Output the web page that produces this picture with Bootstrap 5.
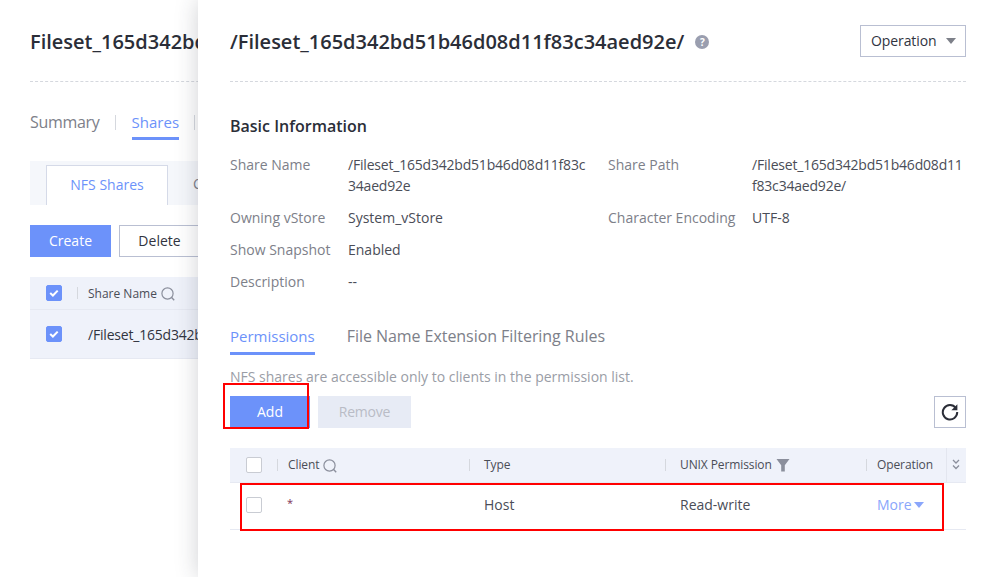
<!DOCTYPE html>
<html lang="en">

<head>
    <meta charset="UTF-8">
    <meta name="viewport" content="width=device-width, initial-scale=1.0">
    <title>Share details</title>
    <link href="https://cdn.jsdelivr.net/npm/bootstrap@5.3.3/dist/css/bootstrap.min.css" rel="stylesheet">
    <style>
        html, body {
            height: 577px;
            overflow: hidden;
        }

        body {
            font-family: "Open Sans", "Noto Sans", sans-serif;
            font-size: 14px;
            color: #31343f;
            background: #fff;
            position: relative;
        }

        /* page behind the drawer */
        .back-page {
            width: 300px;
            padding: 0 0 0 30px;
            white-space: nowrap;
            overflow: hidden;
        }

        .page-title {
            font-size: 20px;
            font-weight: 600;
            line-height: 28px;
            margin: 0;
            color: #2b2e38;
        }

        .back-head {
            height: 82px;
            padding-top: 28px;
            border-bottom: 1px dashed #d5d8de;
        }

        .main-tabs {
            height: 58px;
            padding-top: 29px;
            font-size: 16px;
            line-height: 22px;
            color: #7d8089;
            letter-spacing: -.3px;
        }

        .main-tabs .sep {
            width: 1px;
            height: 15px;
            background: #d5d8de;
            margin: 0 16px 0 15px;
        }

        .tab-on {
            color: #6c92fa;
            border-bottom: 3px solid #6c92fa;
            height: 29px;
            font-size: 15px;
            letter-spacing: 0;
        }

        .sub-tabs {
            margin-top: 21px;
            height: 44px;
            padding: 4px 0 0 16px;
            background: #f5f7fb;
        }

        .sub-tab {
            width: 122px;
            height: 40px;
            line-height: 38px;
            text-align: center;
            background: #fff;
            color: #6c92fa;
            border: 1px solid #d5dae8;
            border-bottom: 0;
        }

        .sub-next {
            margin-left: 25px;
            line-height: 38px;
            color: #7d8089;
        }

        .btn-hw {
            height: 32px;
            border-radius: 0;
            font-size: 14px;
            line-height: 30px;
            padding: 0;
        }

        .btn-blue, .btn-blue:hover {
            background: #6c92fa;
            border: 1px solid #6c92fa;
            color: #fff;
        }

        .btn-line {
            background: #fff;
            border: 1px solid #b9bfd2;
            color: #31343f;
        }

        .btn-off, .btn-off:disabled {
            background: #e7ebf5;
            border: 1px solid #e7ebf5;
            color: #b9bcc6;
            opacity: 1;
            letter-spacing: -.2px;
        }

        .back-actions {
            padding-top: 20px;
        }

        .back-table {
            margin-top: 20px;
            background: #eff2fa;
        }

        .back-row {
            display: flex;
            align-items: center;
            padding-left: 16px;
        }

        .back-row.top {
            height: 33px;
            font-size: 12px;
            color: #4a4d57;
            border-bottom: 1px solid #e6e9f2;
        }

        .back-row.bottom {
            height: 49px;
            letter-spacing: -.2px;
            border-bottom: 1px solid #e6e9f2;
        }

        .chk {
            width: 16px;
            height: 16px;
            flex: none;
            display: block;
            border: 1px solid #c9ccd3;
            border-radius: 2px;
            background: #fff;
        }

        .chk.on {
            background: #6c92fa;
            border-color: #6c92fa;
        }

        .chk svg {
            display: block;
        }

        .vbar {
            width: 1px;
            height: 12px;
            background: #d5d8de;
            display: inline-block;
            flex: none;
        }

        .back-row .vbar {
            margin: 0 10px 0 15px;
        }

        .head-label {
            padding-top: 2px;
        }

        .find-icon {
            margin-left: 4px;
            margin-top: 2px;
            flex: none;
        }

        /* drawer */
        .drawer {
            position: absolute;
            left: 198px;
            top: 0;
            width: 790px;
            height: 577px;
            padding: 0 22px 0 32px;
            background: #fff;
            box-shadow: 0 0 22px rgba(40, 44, 60, .22);
        }

        .drawer-head {
            height: 82px;
            border-bottom: 1px dashed #d5d8de;
            padding-top: 25px;
        }

        .drawer-head .page-title {
            padding-top: 3px;
        }

        .help-dot {
            width: 14px;
            height: 14px;
            border-radius: 50%;
            background: #9a9eaf;
            color: #fff;
            font-size: 10px;
            font-weight: 700;
            line-height: 14px;
            text-align: center;
            margin-left: 11px;
            margin-top: 3px;
        }

        .op-btn {
            width: 106px;
            height: 32px;
            display: flex;
            align-items: center;
            justify-content: space-between;
            padding: 0 9px 1px 10px;
            background: #fff;
            border: 1px solid #b9bfd2;
            color: #31343f;
            font-size: 14px;
            letter-spacing: -.1px;
        }

        .tri {
            width: 0;
            height: 0;
            flex: none;
            border-left: 5.5px solid transparent;
            border-right: 5.5px solid transparent;
            border-top: 6px solid #7d8089;
        }

        .sec-title {
            font-size: 16px;
            font-weight: 600;
            line-height: 22px;
            margin: 33px 0 0;
            color: #2b2e38;
        }

        .info-grid {
            display: grid;
            grid-template-columns: 118px 260px 144px 214px;
            row-gap: 11px;
            margin-top: 17px;
            line-height: 21px;
            font-size: 14px;
        }

        .info-grid .lbl {
            color: #7d8089;
            white-space: nowrap;
        }

        .info-grid .val {
            color: #4a4d57;
        }

        .info-grid .val.path {
            word-break: break-all;
            letter-spacing: -.2px;
        }

        .info-grid .val.wide {
            padding-right: 22px;
        }

        .info-grid .val.one {
            grid-column: span 3;
        }

        .perm-tabs {
            margin-top: 30px;
            height: 33px;
            font-size: 16px;
            line-height: 22px;
            color: #7d8089;
        }

        .perm-tabs .tab-on {
            height: 33px;
            padding-top: 3px;
        }

        .perm-tabs .other {
            margin-left: 32px;
            padding-top: 3px;
            letter-spacing: -.05px;
        }

        .hint {
            margin: 12px 0 0;
            line-height: 20px;
            color: #9a9da6;
            font-size: 14px;
        }

        .tool-row {
            margin-top: 9px;
        }

        .refresh-btn {
            width: 32px;
            height: 32px;
            display: flex;
            align-items: center;
            justify-content: center;
            padding: 0;
            background: #fff;
            border: 1px solid #b9bfd2;
        }

        .perm-table {
            margin: 20px 0 0;
            table-layout: fixed;
            width: 736px;
            --bs-table-bg: transparent;
        }

        .perm-table th {
            height: 34px;
            padding: 0 0 0 10px;
            background: #eff2fa;
            font-size: 12px;
            font-weight: 400;
            letter-spacing: -.1px;
            color: #4a4d57;
            vertical-align: middle;
            border-bottom: 1px solid #e6e9f2;
            white-space: nowrap;
        }

        .perm-table th.chev-cell {
            border-left: 1px solid #e3e6ef;
        }

        .perm-table td {
            height: 47px;
            padding: 0 0 2px 10px;
            color: #4a4d57;
            font-size: 14px;
            vertical-align: middle;
            border-bottom: 1px solid #e6e9f2;
        }

        .perm-table .first {
            padding-left: 16px;
        }

        .perm-table .cell-line {
            display: flex;
            align-items: center;
        }

        .perm-table .vbar {
            margin-right: 10px;
        }

        .perm-table .vbar.far {
            margin-right: 14px;
        }

        .perm-table .text-cell {
            padding-left: 15px;
        }

        .star {
            display: inline-block;
            color: #7c2f55;
            font-size: 11px;
            padding-bottom: 6px;
        }

        .more-link {
            color: #8aa6fb;
            text-decoration: none;
            margin-left: 1px;
        }

        .tri.blue {
            border-top-color: #8aa6fb;
            margin-left: 2px;
        }

        .mark-box {
            position: absolute;
            border: 2px solid #f00;
            pointer-events: none;
        }

        .mark-add {
            left: 223px;
            top: 383px;
            width: 86px;
            height: 46px;
        }

        .mark-row {
            left: 240px;
            top: 483px;
            width: 704px;
            height: 48px;
        }
    </style>
</head>

<body>
    <div class="back-page">
        <div class="back-head">
            <h1 class="page-title">Fileset_165d342bd51b46d08d11f83c34aed92e</h1>
        </div>
        <div class="main-tabs d-flex align-items-start">
            <span>Summary</span>
            <span class="sep mt-1"></span>
            <span class="tab-on">Shares</span>
            <span class="sep mt-1"></span>
        </div>
        <div class="sub-tabs d-flex">
            <div class="sub-tab">NFS Shares</div>
            <div class="sub-next">CIFS Shares</div>
        </div>
        <div class="back-actions d-flex gap-2">
            <button class="btn btn-hw btn-blue" style="width:81px">Create</button>
            <button class="btn btn-hw btn-line" style="width:81px">Delete</button>
        </div>
        <div class="back-table">
            <div class="back-row top">
                <span class="chk on"><svg width="14" height="14" viewBox="0 0 14 14"><path d="M3.2 7l2.7 2.5 4.8-4.9" fill="none" stroke="#fff" stroke-width="2"/></svg></span>
                <span class="vbar"></span>
                <span class="head-label">Share Name</span>
                <svg class="find-icon" width="14" height="14" viewBox="0 0 14 14"><circle cx="6.5" cy="6.5" r="5.6" fill="none" stroke="#8b8f9c" stroke-width="1.2"/><path d="M10.6 10.6l2.6 2.6" stroke="#8b8f9c" stroke-width="1.4"/></svg>
            </div>
            <div class="back-row bottom">
                <span class="chk on"><svg width="14" height="14" viewBox="0 0 14 14"><path d="M3.2 7l2.7 2.5 4.8-4.9" fill="none" stroke="#fff" stroke-width="2"/></svg></span>
                <span style="margin-left:26px">/Fileset_165d342bd51b46d08d11f83c34aed92e/</span>
            </div>
        </div>
    </div>

    <div class="drawer">
        <div class="drawer-head d-flex align-items-start justify-content-between">
            <div class="d-flex align-items-center">
                <h1 class="page-title">/Fileset_165d342bd51b46d08d11f83c34aed92e/</h1>
                <span class="help-dot">?</span>
            </div>
            <button class="op-btn"><span>Operation</span><span class="tri"></span></button>
        </div>

        <h2 class="sec-title">Basic Information</h2>
        <div class="info-grid">
            <div class="lbl">Share Name</div>
            <div class="val path wide">/Fileset_165d342bd51b46d08d11f83c34aed92e</div>
            <div class="lbl">Share Path</div>
            <div class="val path">/Fileset_165d342bd51b46d08d11f83c34aed92e/</div>
            <div class="lbl">Owning vStore</div>
            <div class="val">System_vStore</div>
            <div class="lbl">Character Encoding</div>
            <div class="val">UTF-8</div>
            <div class="lbl">Show Snapshot</div>
            <div class="val one">Enabled</div>
            <div class="lbl">Description</div>
            <div class="val one">--</div>
        </div>

        <div class="perm-tabs d-flex align-items-start">
            <span class="tab-on">Permissions</span>
            <span class="other">File Name Extension Filtering Rules</span>
        </div>
        <p class="hint">NFS shares are accessible only to clients in the permission list.</p>

        <div class="tool-row d-flex align-items-center">
            <button class="btn btn-hw btn-blue" style="width:80px">Add</button>
            <button class="btn btn-hw btn-off ms-2" style="width:93px" disabled>Remove</button>
            <button class="refresh-btn ms-auto" aria-label="Refresh">
                <svg width="18" height="18" viewBox="0 0 18 18"><path d="M14.8 5A7.2 7.2 0 1 0 16.2 9" fill="none" stroke="#2b2e38" stroke-width="2"/><path d="M16.4 1.2v6h-6z" fill="#2b2e38"/></svg>
            </button>
        </div>

        <table class="table perm-table">
            <colgroup>
                <col style="width:47px"><col style="width:192px"><col style="width:196px"><col style="width:201px"><col style="width:80px"><col style="width:20px">
            </colgroup>
            <thead>
                <tr>
                    <th class="first"><span class="chk"></span></th>
                    <th class="px-0"><div class="cell-line"><span class="vbar"></span>Client
                        <svg class="find-icon" width="14" height="14" viewBox="0 0 14 14"><circle cx="6.5" cy="6.5" r="5.6" fill="none" stroke="#8b8f9c" stroke-width="1.2"/><path d="M10.6 10.6l2.6 2.6" stroke="#8b8f9c" stroke-width="1.4"/></svg>
                    </div></th>
                    <th class="px-0"><div class="cell-line"><span class="vbar far"></span>Type</div></th>
                    <th class="px-0"><div class="cell-line"><span class="vbar far"></span>UNIX Permission
                        <svg class="ms-1" width="14" height="14" viewBox="0 0 14 14"><path d="M0.5 1h13L8.8 7.2V13.5H5.2V7.2z" fill="#8b8f9c"/></svg>
                    </div></th>
                    <th class="px-0"><div class="cell-line"><span class="vbar"></span>Operation</div></th>
                    <th class="px-0 chev-cell">
                        <svg class="d-block" style="margin-left:5px" width="8" height="11" viewBox="0 0 8 11"><path d="M1 1l3 3 3-3M1 6.5l3 3 3-3" fill="none" stroke="#8b8f9c" stroke-width="1.3"/></svg>
                    </th>
                </tr>
            </thead>
            <tbody>
                <tr>
                    <td class="first"><span class="chk"></span></td>
                    <td><span class="star">*</span></td>
                    <td class="text-cell">Host</td>
                    <td class="text-cell">Read-write</td>
                    <td><a class="more-link d-inline-flex align-items-center" href="#">More<span class="tri blue"></span></a></td>
                    <td></td>
                </tr>
            </tbody>
        </table>
    </div>

    <div class="mark-box mark-add"></div>
    <div class="mark-box mark-row"></div>

    <script src="https://cdn.jsdelivr.net/npm/bootstrap@5.3.3/dist/js/bootstrap.bundle.min.js"></script>
</body>

</html>
